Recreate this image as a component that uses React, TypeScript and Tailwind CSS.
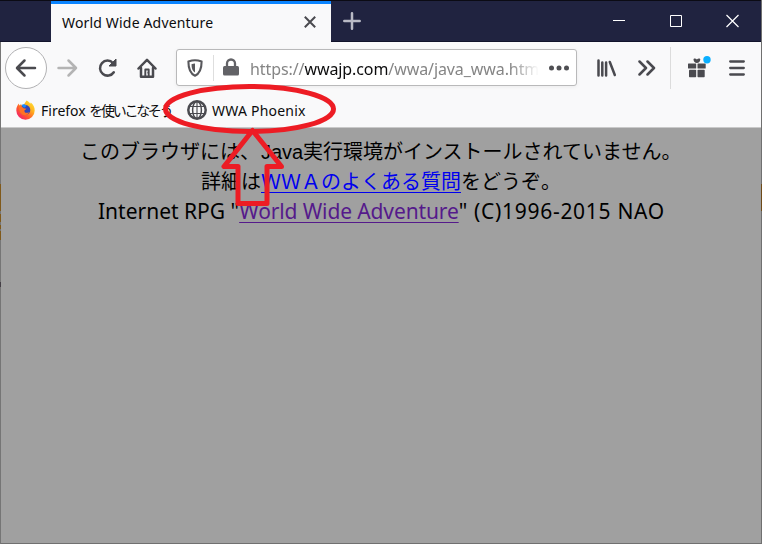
import React from "react";

const ui = "font-['Noto_Sans','Noto_Sans_CJK_JP',sans-serif]";

function BackIcon() {
  return (
    <svg width="42" height="44" viewBox="0 0 42 44" fill="none">
      <circle cx="21" cy="22" r="20.5" fill="#fff" stroke="#b1b1b3" />
      <path d="M30 22H12.5M19.5 14.5L12 22l7.500 7.500" stroke="#4a4a4f" strokeWidth="2.500" strokeLinecap="round" strokeLinejoin="round" />
    </svg>
  );
}

function ForwardIcon() {
  return (
    <svg width="22" height="20" viewBox="0 0 22 20" fill="none" stroke="#b4b4b4" strokeWidth="2.500" strokeLinecap="round" strokeLinejoin="round">
      <path d="M1.500 10h17.500M11.500 2.500l7.500 7.500-7.500 7.500" />
    </svg>
  );
}

function ReloadIcon() {
  return (
    <svg width="20" height="20" viewBox="0 0 20 20">
      <path d="M15.800 14.200A7.500 7.500 0 1 1 15 5" fill="none" stroke="#4a4a4f" strokeWidth="2.500" strokeLinecap="round" />
      <path d="M18 1v7h-7z" fill="#4a4a4f" stroke="#4a4a4f" strokeWidth="1" strokeLinejoin="round" />
    </svg>
  );
}

function HomeIcon() {
  return (
    <svg width="20" height="20" viewBox="0 0 20 20" fill="none" stroke="#4a4a4f" strokeWidth="2.500" strokeLinecap="round" strokeLinejoin="round">
      <path d="M1.500 10.500L10 1.800l8.500 8.700M4 10v8.700h12V10" />
      <path d="M8.300 18.500V11.500h3.400V18.500" strokeWidth="1.900" />
      <path d="M11.200 14.300v.8" strokeWidth="1.500" />
    </svg>
  );
}

function ShieldIcon() {
  return (
    <svg width="16" height="18" viewBox="0 0 16 18">
      <path d="M8 1.200c2.200 0 4.400.5 6.600 1.300 0 7-1.100 11.800-6.600 14.200C2.500 14.300 1.400 9.500 1.400 2.500 3.600 1.700 5.800 1.200 8 1.200z" fill="none" stroke="#58585c" strokeWidth="2.100" strokeLinejoin="round" />
      <path d="M8 4.500v9C5.500 12 4.600 9.500 4.500 5.200 5.600 4.800 6.800 4.600 8 4.500z" fill="#58585c" />
    </svg>
  );
}

function LockIcon() {
  return (
    <svg width="16" height="18" viewBox="0 0 16 18">
      <rect x="0" y="8" width="16" height="9.500" rx="1.500" fill="#626266" />
      <path d="M4 9V5.500a4 4 0 0 1 8 0V9" fill="none" stroke="#626266" strokeWidth="2.300" />
    </svg>
  );
}

function LibraryIcon() {
  return (
    <svg width="20" height="18" viewBox="0 0 20 18" fill="none" stroke="#4a4a4f" strokeWidth="2.500" strokeLinecap="round">
      <path d="M2.500 1.500v15M6.300 3.500v13M10.100 3.500v13M13.800 3l5 13" />
    </svg>
  );
}

function ChevronsIcon() {
  return (
    <svg width="18" height="16" viewBox="0 0 18 16" fill="none" stroke="#4a4a4f" strokeWidth="2.500" strokeLinecap="round" strokeLinejoin="round">
      <path d="M1.500 1.500L8 8 1.500 14.500M9.500 1.500L16 8 9.500 14.500" />
    </svg>
  );
}

function GiftIcon() {
  return (
    <svg width="24" height="22" viewBox="0 0 24 22" fill="#4a4a4f">
      <rect x="1" y="7.500" width="8.200" height="5" rx=".5" />
      <rect x="10.500" y="7.500" width="8.200" height="5" rx=".5" />
      <rect x="2" y="13.700" width="7.200" height="7.600" rx=".7" />
      <rect x="10.500" y="13.700" width="7.200" height="7.600" rx=".7" />
      <path d="M6.500 3.500c0-1.300 2.400-1.300 3.400 0 1-1.300 3.400-1.300 3.400 0-.2 2.200-1.400 3.400-3.400 3.400s-3.200-1.200-3.400-3.400z" />
      <circle cx="20" cy="3.700" r="3.700" fill="#0aafff" />
    </svg>
  );
}

function FirefoxIcon() {
  return (
    <svg width="19" height="20" viewBox="0 0 19 20">
      <defs>
        <linearGradient id="flame" x1="1" y1="0" x2="0.100" y2="1">
          <stop offset="0" stopColor="#fff03c" />
          <stop offset=".35" stopColor="#ffb41f" />
          <stop offset=".65" stopColor="#ff5a2c" />
          <stop offset="1" stopColor="#f0127d" />
        </linearGradient>
      </defs>
      <path d="M10.500.5c2 .8 3 2 3.700 3.200l.6-1.200C17.500 4.500 18.800 7.500 18.700 10.500a9.200 9.200 0 0 1-18.400 0C.2 7.500 1.500 5 3 3.500l.2 2L5 4.300l1 1.200C8 5 8.500 3.500 10.500.5z" fill="url(#flame)" />
      <circle cx="9.300" cy="10" r="5" fill="#3346b8" />
      <path d="M5.500 5C7 3.800 9.500 4 10.500 5.800L9 7.500H7.500z" fill="#198cff" />
      <path d="M3.300 6.500C5 6.300 7 7 7.500 8.300l3 .4-2.300 2 .8 1.700c1.500.7 3 .4 4-.5-.6 2.600-3 3.700-5.300 3.200C4.500 14.300 2.800 11 3.300 6.500z" fill="#ff7125" />
    </svg>
  );
}

function GlobeIcon() {
  return (
    <svg width="20" height="20" viewBox="0 0 20 20" fill="none" stroke="#4a4a4f" strokeWidth="1.500">
      <circle cx="10" cy="10" r="8.700" strokeWidth="2.500" />
      <ellipse cx="10" cy="10" rx="4.400" ry="8.600" />
      <path d="M3 6.500h14M3 13.500h14M10 2v16" strokeWidth="1.100" />
    </svg>
  );
}

function TitleBar() {
  return (
    <div className="flex h-[42px] border-t border-[#0b0b14] bg-[#202340]">
      <div className="w-[51px] border-b border-[#11132b]" />
      <div className="flex w-[280px] border-t-[3px] border-[#0a84ff] bg-[#f9f9fa] pl-[11px]">
        <span className="w-[242px] whitespace-nowrap pt-[9px] text-[14px] leading-[20px] tracking-[0.17px]">World Wide Adventure</span>
        <svg className="mt-[12px]" width="12" height="12" viewBox="0 0 12 12" stroke="#4a4a4f" strokeWidth="2">
          <path d="M.8.8l10.400 10.400M11.200.8L.8 11.200" />
        </svg>
      </div>
      <div className="flex flex-1 border-b border-[#11132b]">
        <svg className="mt-[11px] ml-[12px]" width="18" height="18" viewBox="0 0 18 18" stroke="#b9bac5" strokeWidth="2.500" strokeLinecap="round">
          <path d="M9 1.300v15.400M1.300 9h15.400" />
        </svg>
        <svg className="mt-[13px] ml-auto mr-[20px]" width="128" height="14" viewBox="0 0 128 14" fill="none" stroke="#fff">
          <path d="M0 6.500h12M57.500 1.500h11v11h-11z" />
          <path d="M113.500 1l12 12M125.500 1l-12 12" strokeWidth="1.200" />
        </svg>
      </div>
    </div>
  );
}

function Toolbar() {
  return (
    <div className="flex h-[51px] items-center pl-[5px]">
      <BackIcon />
      <div className="ml-[10px] flex"><ForwardIcon /></div>
      <div className="ml-[19px] flex"><ReloadIcon /></div>
      <div className="ml-[19px] flex"><HomeIcon /></div>
      <div className="ml-[19px] flex h-[37px] w-[401px] items-center rounded-[3px] border border-[#b9b9ba] bg-white shadow-[0_1px_4px_rgba(0,0,0,0.06)]">
        <div className="ml-[10px] flex"><ShieldIcon /></div>
        <div className="ml-[10px] h-[26px] w-px bg-[#dedede]" />
        <div className="ml-[9px] mb-[1px] flex"><LockIcon /></div>
        <div className="ml-[11px] w-[289px] whitespace-nowrap pt-[2px] text-[16px] tracking-[-0.09px] text-[#858585] [mask-image:linear-gradient(to_right,black_90%,transparent_100%)]">
          https://<span className="text-[#0c0c0d]">wwajp.com</span>/wwa/java_wwa.htm
        </div>
        <svg className="ml-[10px]" width="20" height="6" viewBox="0 0 20 6" fill="#4f4f53">
          <circle cx="2.500" cy="3" r="2.500" /><circle cx="10" cy="3" r="2.500" /><circle cx="17.500" cy="3" r="2.500" />
        </svg>
      </div>
      <div className="ml-[19px] flex"><LibraryIcon /></div>
      <div className="ml-[22px] flex"><ChevronsIcon /></div>
      <div className="ml-[14px] h-[42px] w-px bg-[#dcdcdc]" />
      <div className="ml-[16px] mb-[2px] flex"><GiftIcon /></div>
      <svg className="ml-[18px]" width="16" height="16" viewBox="0 0 16 16" stroke="#4a4a4f" strokeWidth="2.300" strokeLinecap="round">
        <path d="M1.200 1.500h13.600M1.200 8h13.600M1.200 14.500h13.600" />
      </svg>
    </div>
  );
}

function Bookmarks() {
  return (
    <div className="flex h-[35px] items-center border-b border-[#c9c9c9] pl-[15px] text-[14px]">
      <FirefoxIcon />
      <span className="ml-[6px] w-[131px] whitespace-nowrap">Firefox <span className="tracking-[-2.300px]">を使いこなそう</span></span>
      <div className="ml-[15px] flex"><GlobeIcon /></div>
      <span className="ml-[5px] whitespace-nowrap tracking-[0.22px]">WWA Phoenix</span>
    </div>
  );
}

function Annotation() {
  return (
    <svg className="absolute left-[155px] top-[80px]" width="190" height="135" viewBox="155 80 190 135" fill="none" stroke="#ed1c24" strokeWidth="5">
      <ellipse cx="249.500" cy="109" rx="84" ry="22.500" />
      <path d="M252.500 130.500L224 166.500H238V203.500H267V166.500H281.500Z" strokeLinejoin="round" />
    </svg>
  );
}

export default function App() {
  return (
    <div className={`relative flex h-[544px] w-[762px] overflow-hidden bg-[#f9f9fa] text-[#0c0c0d] ${ui}`}>
      <div className="flex w-px shrink-0 flex-col bg-[#757575]">
        <div className="mt-[184px] h-[27px] bg-[#80591a]" />
        <div className="mt-[3px] h-[8px] bg-[#80591a]" />
        <div className="mt-[3px] h-[4px] bg-[#80591a]" />
        <div className="mt-[2px] h-[9px] bg-[#80591a]" />
        <div className="mt-[42px] h-[5px] bg-[#443f46]" />
      </div>
      <div className="flex w-[760px] flex-col">
        <div className="-ml-px"><TitleBar /></div>
        <div className="-ml-px"><Toolbar /></div>
        <Bookmarks />
        <main className="flex-1 border-b border-[#707070] bg-[#a0a0a0] pt-[8px] text-[20px] leading-[30px] text-black">
          <div className="font-['Noto_Sans_CJK_JP',sans-serif]">
            <p className="ml-[79px] h-[30px] whitespace-nowrap">このブラウザには、<span className="inline-block w-[43px] pl-px font-['Liberation_Sans',sans-serif]">Java</span>実行環境がインストールされていません。</p>
            <p className="ml-[200px] h-[30px] whitespace-nowrap">詳細は<a className="text-[#0000ee] underline decoration-1 underline-offset-[3px]">ＷＷＡのよくある質問</a>をどうぞ。</p>
          </div>
          <p className="ml-[97px] whitespace-nowrap text-[21px]">Internet RPG "<a className="tracking-[-0.120px] text-[#551a8b] underline decoration-1 underline-offset-[3px]">World Wide Adventure</a><span className="tracking-[0.700px]">" (C)1996-2015 NAO</span></p>
        </main>
      </div>
      <div className="w-px shrink-0 bg-[#707070]"><div className="mt-[184px] h-[27px] bg-[#6e4a18]" /></div>
      <Annotation />
    </div>
  );
}
